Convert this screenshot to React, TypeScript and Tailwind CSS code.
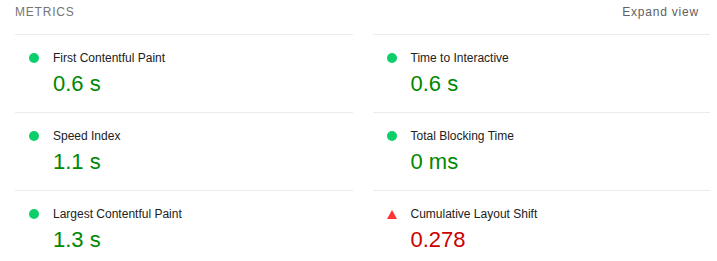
const metrics = [
  { title: "First Contentful Paint", value: "0.6 s", pass: true },
  { title: "Time to Interactive", value: "0.6 s", pass: true },
  { title: "Speed Index", value: "1.1 s", pass: true },
  { title: "Total Blocking Time", value: "0 ms", pass: true },
  { title: "Largest Contentful Paint", value: "1.3 s", pass: true },
  { title: "Cumulative Layout Shift", value: "0.278", pass: false },
];

function Metric({ title, value, pass }: { title: string; value: string; pass: boolean }) {
  return (
    <div className="h-[78px] border-t border-[#ebebeb] pt-[16px]">
      <div className="flex items-center h-[14px]">
        <div className="w-[38px] flex items-center pl-[14px]">
          {pass ? (
            <span className="block w-[10px] h-[10px] rounded-full bg-[#0cce6b]" />
          ) : (
            <svg width="10" height="9" viewBox="0 0 10 9" className="block">
              <polygon points="5,0 10,9 0,9" fill="#ff3333" />
            </svg>
          )}
        </div>
        <span className="text-[12px] leading-[14px] text-[#212121]">{title}</span>
      </div>
      <div
        className={`mt-[5px] pl-[38px] text-[22px] leading-[28px] ${
          pass ? "text-[#008800]" : "text-[#cc0000]"
        }`}
      >
        {value}
      </div>
    </div>
  );
}

export default function App() {
  return (
    <div
      className="w-[717px] h-[261px] overflow-hidden bg-white pl-[15px]"
      style={{ fontFamily: '"Liberation Sans", Arial, sans-serif' }}
    >
      <div className="w-[695px]">
        {/* header */}
        <div className="h-[34px] pt-[5px] pr-[11px] flex justify-between text-[12px] leading-[14px] tracking-[0.8px] text-[#757575]">
          <span>METRICS</span>
          <span className="text-[#616161]">Expand view</span>
        </div>
        {/* metric grid */}
        <div className="grid grid-cols-2 gap-x-[20px]">
          {metrics.map((m) => (
            <Metric key={m.title} {...m} />
          ))}
        </div>
      </div>
    </div>
  );
}
